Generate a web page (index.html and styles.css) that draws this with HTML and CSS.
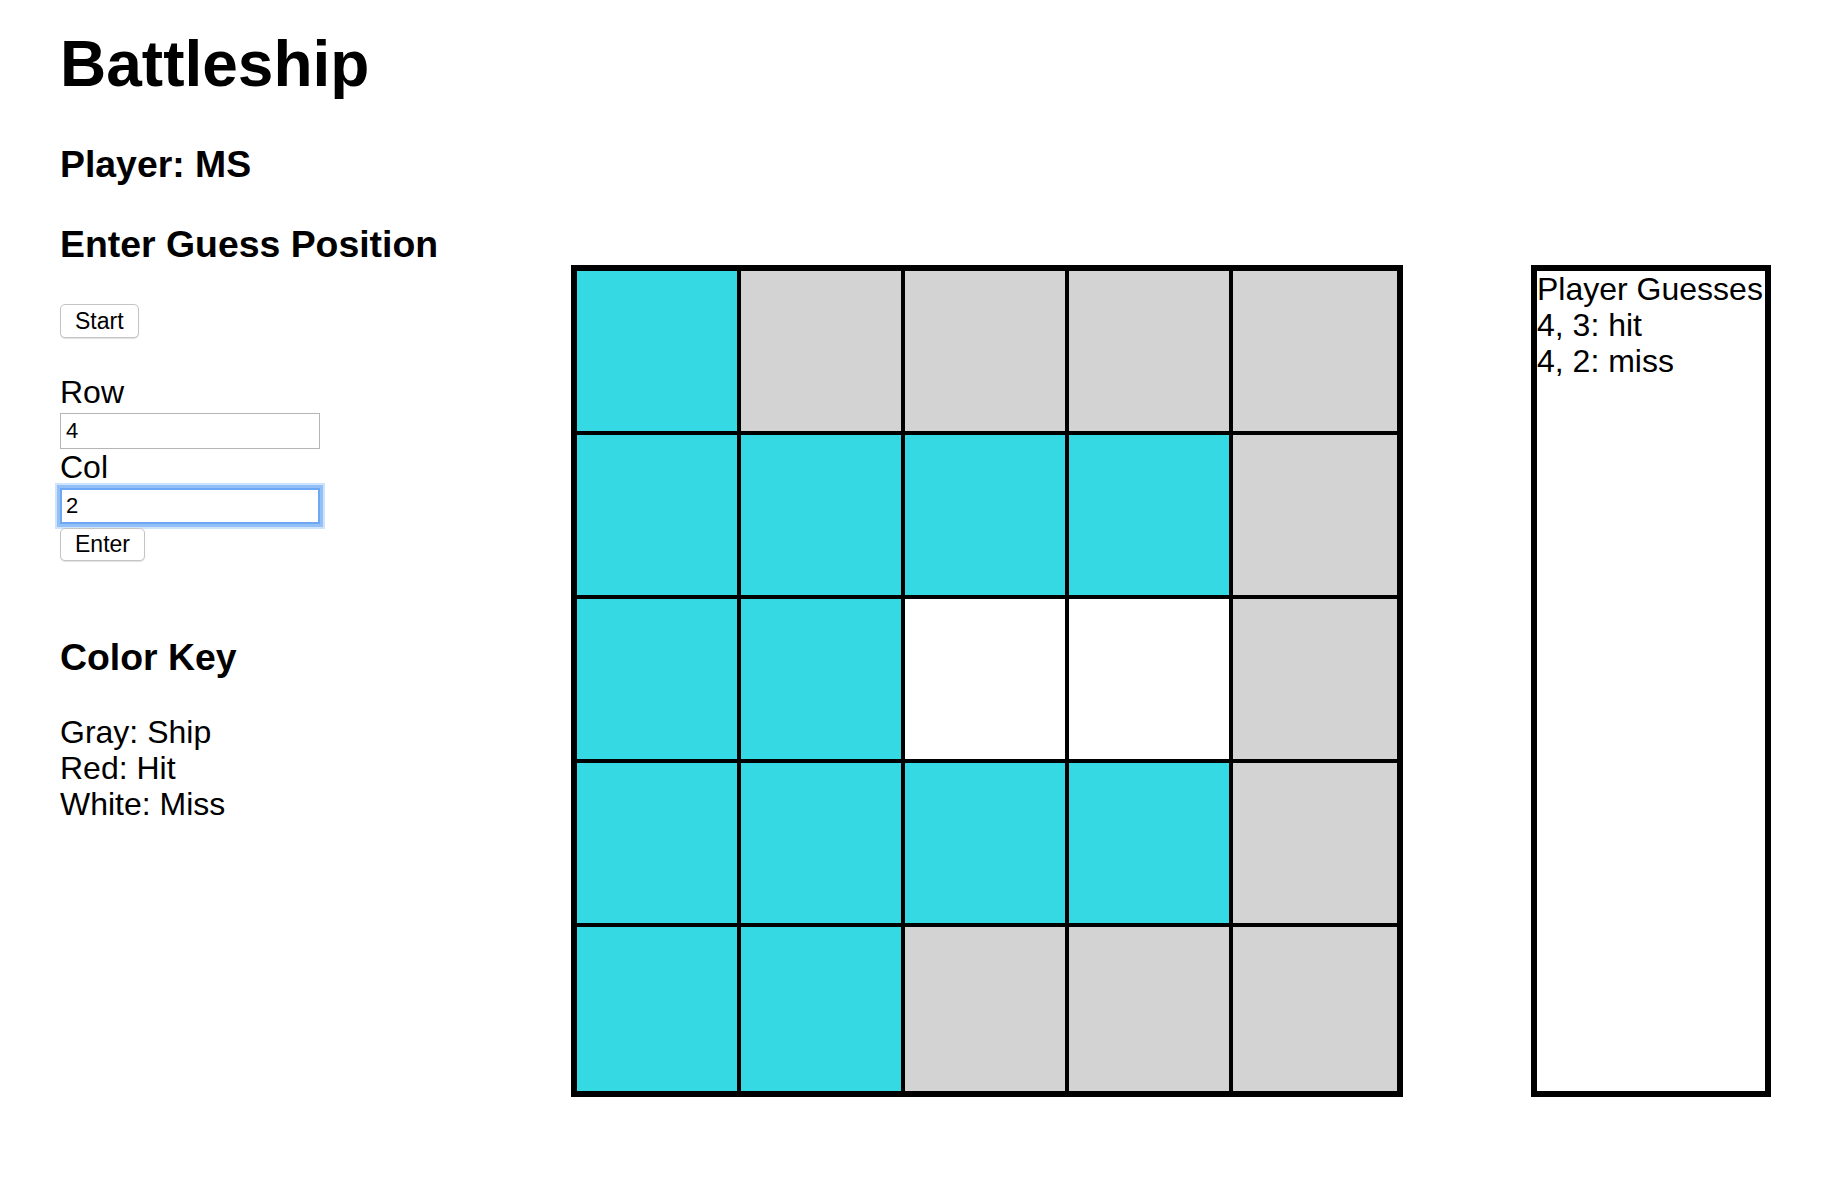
FILE: index.html
```html
<!DOCTYPE html>
<html lang="en">
<head>
    <meta charset="UTF-8">
    <meta name="viewport" content="width=device-width, initial-scale=1.0">
    <title>Battleship</title>
    <link rel="stylesheet" href="styles.css">
</head>
<body>
    <div class="game">
        <div class="controls">
            <h1>Battleship</h1>
            <h3>Player: MS</h3>
            <h3>Enter Guess Position</h3>
            <button class="btn">Start</button>

            <label class="field-label" for="row">Row</label>
            <input class="field" type="text" id="row" value="4">
            <label class="field-label" for="col">Col</label>
            <input class="field is-focused" type="text" id="col" value="2">
            <button class="btn btn-enter">Enter</button>

            <h3 class="key-title">Color Key</h3>
            <div class="key">
                Gray: Ship<br>
                Red: Hit<br>
                White: Miss
            </div>
        </div>

        <div class="play-area">
            <div class="board">
                <div class="cell water"></div>
                <div class="cell ship"></div>
                <div class="cell ship"></div>
                <div class="cell ship"></div>
                <div class="cell ship"></div>

                <div class="cell water"></div>
                <div class="cell water"></div>
                <div class="cell water"></div>
                <div class="cell water"></div>
                <div class="cell ship"></div>

                <div class="cell water"></div>
                <div class="cell water"></div>
                <div class="cell miss"></div>
                <div class="cell miss"></div>
                <div class="cell ship"></div>

                <div class="cell water"></div>
                <div class="cell water"></div>
                <div class="cell water"></div>
                <div class="cell water"></div>
                <div class="cell ship"></div>

                <div class="cell water"></div>
                <div class="cell water"></div>
                <div class="cell ship"></div>
                <div class="cell ship"></div>
                <div class="cell ship"></div>
            </div>

            <div class="guesses">
                Player Guesses<br>
                4, 3: hit<br>
                4, 2: miss
            </div>
        </div>
    </div>
</body>
</html>
```

FILE: styles.css
```css
body {
    margin: 0;
    font-family: "Liberation Sans", Arial, Helvetica, sans-serif;
    font-size: 32px;
    color: #000;
    background: #fff;
}
.game {
    display: flex;
    align-items: flex-start;
    padding-left: 60px;
}
.controls {
    width: 511px;
    flex-shrink: 0;
}
h1 {
    font-size: 64px;
    line-height: 74px;
    margin: 27px 0 42px;
}
h3 {
    font-size: 37.4px;
    line-height: 43px;
    margin: 37px 0;
}
.btn {
    display: block;
    margin-top: 38px;
    font-family: "Liberation Sans", Arial, sans-serif;
    font-size: 23px;
    color: #000;
    background: #fff;
    border: 1px solid #c4c4c4;
    border-radius: 5px;
    box-shadow: 0 1px 1px rgba(0, 0, 0, 0.12);
    height: 34px;
    padding: 0 14px;
}
.btn-enter {
    height: 33px;
    margin-top: 4px;
}
.field-label {
    display: block;
    line-height: 36px;
}
.controls .btn + .field-label {
    margin-top: 36px;
}
.field {
    display: block;
    box-sizing: border-box;
    width: 260px;
    height: 36px;
    margin-top: 3px;
    padding: 0 5px;
    border: 1px solid #b5b5b5;
    font-family: "Liberation Sans", Arial, sans-serif;
    font-size: 22px;
    outline: none;
}
.field.is-focused {
    border: 2px solid #6ea8f5;
    padding: 0 4px;
    box-shadow: 0 0 0 3px #94c0f8, 0 0 0 5px rgba(148, 192, 248, 0.45);
}
.key-title {
    margin-top: 75px;
    margin-bottom: 35px;
}
.key {
    line-height: 36px;
}
.play-area {
    display: flex;
    align-items: stretch;
    margin-top: 265px;
}
.board {
    display: grid;
    grid-template-columns: repeat(5, 164px);
    grid-template-rows: repeat(5, 164px);
    border: 6px solid #000;
}
.cell {
    box-sizing: border-box;
    border-right: 4px solid #000;
    border-bottom: 4px solid #000;
}
.cell:nth-child(5n) {
    border-right: none;
}
.cell:nth-child(n+21) {
    border-bottom: none;
}
.water {
    background-color: #35d9e3;
}
.ship {
    background-color: #d3d3d3;
}
.miss {
    background-color: #fff;
}
.hit {
    background-color: red;
}
.guesses {
    box-sizing: border-box;
    width: 240px;
    margin-left: 128px;
    border: 6px solid #000;
    line-height: 36px;
}
```
